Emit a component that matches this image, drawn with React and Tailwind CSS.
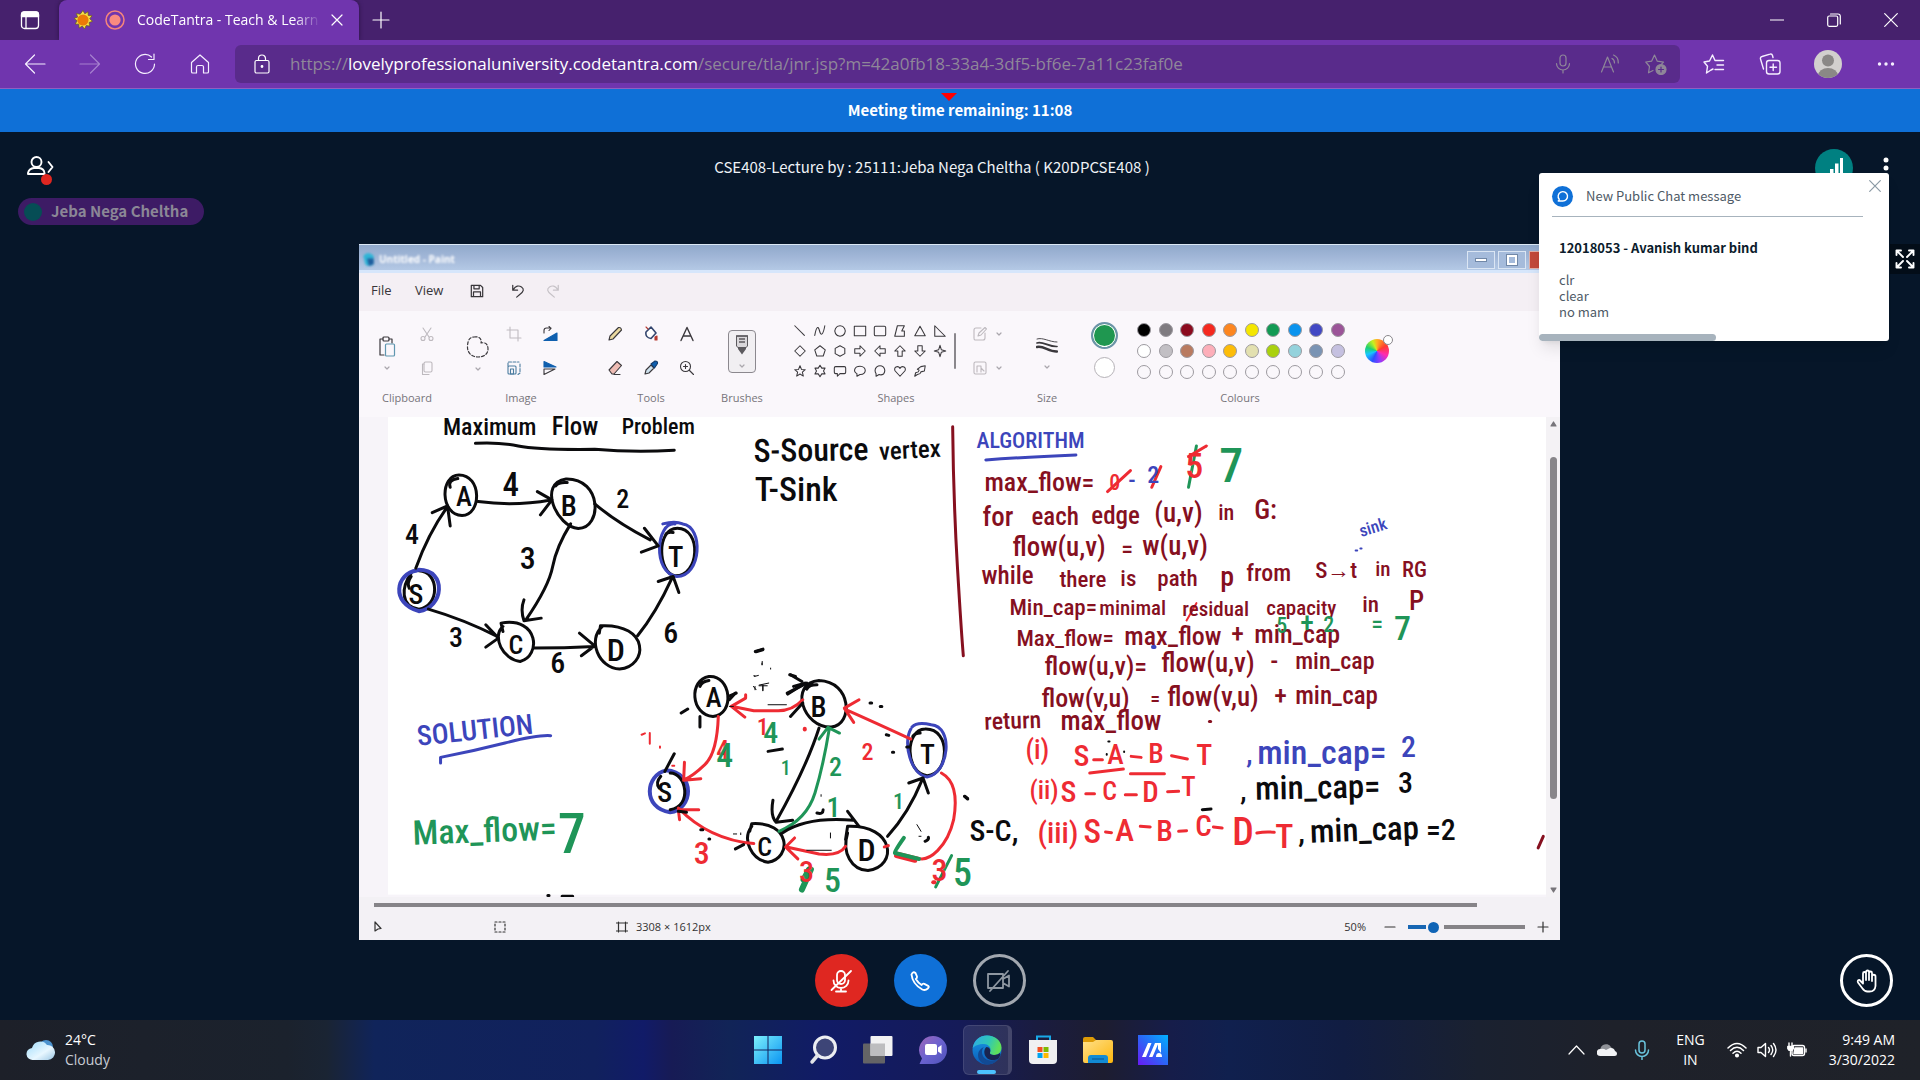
import React from "react";

const UI = "font-['Open_Sans','Noto_Sans',sans-serif]";
const MEET = "font-['Noto_Sans_CJK_SC','Open_Sans',sans-serif]";

function Icon({ w = 20, h, vb = "0 0 20 20", sw = 1.2, className = "", children }) {
  return (
    <svg width={w} height={h || w} viewBox={vb} fill="none" stroke="currentColor" strokeWidth={sw}
      strokeLinecap="round" strokeLinejoin="round" className={`shrink-0 ${className}`} aria-hidden="true">
      {children}
    </svg>
  );
}

/* ---------- Browser chrome ---------- */

function TabStrip() {
  return (
    <div className="flex h-10 items-stretch bg-[#46216d] text-white">
      <button aria-label="Tab actions" className="flex w-[59px] items-center justify-center">
        <Icon sw={1.3}><rect x="1.5" y="2" width="17" height="16.5" rx="3" /><path d="M1.5 4.5a2.5 2.5 0 0 1 2.5-2.5h12a2.5 2.5 0 0 1 2.500 2.500V6.500h-17z" fill="currentColor" /><path d="M6 7v11" /></Icon>
      </button>
      <div className="flex w-[300px] items-center rounded-t-lg bg-[#7035ae] pl-[14px] shadow-[0_0_4px_#2a1244]">
        <svg width="20" height="20" viewBox="0 0 20 20" className="shrink-0" aria-hidden="true">
          <path d="M10 .5l1.800 3.300L15 1.800l.2 3.700 3.800.3-2.300 3 2.800 2.500-3.500 1.200.8 3.600-3.600-.6L11.500 19l-2.200-3-3.200 2-.2-3.800-3.700-.2 2-3.200L1 8.500l3.600-1.300L3.500 3.600l3.700.6z" fill="#f3e04a" stroke="#6b6010" strokeWidth=".7" />
          <circle cx="10" cy="10" r="5.600" fill="#ec7a08" />
        </svg>
        <svg width="20" height="20" viewBox="0 0 20 20" className="ml-3 shrink-0" aria-hidden="true">
          <circle cx="10" cy="10" r="9" fill="none" stroke="#f4857b" strokeWidth="1.500" /><circle cx="10" cy="10" r="5.600" fill="#f98a80" />
        </svg>
        <span className="ml-3 w-[184px] overflow-hidden whitespace-nowrap text-sm [mask-image:linear-gradient(to_right,black_85%,transparent)]">CodeTantra - Teach &amp; Learn</span>
        <button aria-label="Close tab" className="ml-[9px]"><Icon w={14} vb="0 0 14 14"><path d="M2 2l10 10M12 2L2 12" /></Icon></button>
      </div>
      <button aria-label="New tab" className="flex w-[43px] items-center justify-center"><Icon w={18} vb="0 0 18 18"><path d="M9 1v16M1 9h16" /></Icon></button>
      <div className="mr-px ml-auto flex">
        <button aria-label="Minimize" className="flex w-[57px] items-center justify-center"><Icon w={14} vb="0 0 14 14"><path d="M.5 7h13" /></Icon></button>
        <button aria-label="Restore" className="flex w-[57px] items-center justify-center"><Icon w={14} vb="0 0 14 14"><rect x=".7" y="3" width="10" height="10.300" rx="1.500" /><path d="M3.500 1h7.500a2.300 2.300 0 0 1 2.300 2.300V11" /></Icon></button>
        <button aria-label="Close" className="flex w-[57px] items-center justify-center"><Icon w={14} vb="0 0 14 14"><path d="M.7.7l12.600 12.600M13.300.7L.7 13.300" /></Icon></button>
      </div>
    </div>
  );
}

function Toolbar() {
  return (
    <div className="flex h-[49px] items-center border-b border-[#9060c0] bg-[#7035ae] text-[#f5efff]">
      <div className="flex w-[235px] shrink-0 items-center pl-[7px]">
        <button aria-label="Back" className="flex w-[55px] justify-center"><Icon w={22} vb="0 0 22 22"><path d="M21 11H1.500M10.500 2L1.500 11l9 9" /></Icon></button>
        <button aria-label="Forward" className="flex w-[55px] justify-center opacity-40"><Icon w={22} vb="0 0 22 22"><path d="M1 11h19.500M11.500 2l9 9-9 9" /></Icon></button>
        <button aria-label="Refresh" className="flex w-[55px] justify-center"><Icon w={22} vb="0 0 22 22"><path d="M20.500 11a9.500 9.500 0 1 1-3-7M20 1v5.500h-5.500" /></Icon></button>
        <button aria-label="Home" className="flex w-[55px] justify-center"><Icon w={20}><path d="M1.500 8.500L10 1l8.500 7.500v9.200a1.300 1.300 0 0 1-1.300 1.300h-3.700v-6a1.500 1.500 0 0 0-1.500-1.500H8a1.500 1.500 0 0 0-1.500 1.500v6H2.800a1.300 1.300 0 0 1-1.300-1.300z" /></Icon></button>
      </div>
      <div className="flex h-[38px] flex-1 items-center rounded-md bg-[#592b8b] pl-[18px] text-[#8f8799]">
        <Icon w={18} h={20} vb="0 0 18 20" className="text-white"><rect x="2" y="6.500" width="14" height="12.500" rx="1.500" /><path d="M5.500 6V4.500a3.500 3.500 0 0 1 7 0V6" /><circle cx="9" cy="12.500" r=".8" fill="currentColor" /></Icon>
        <div role="textbox" aria-label="Address" className="ml-[19px] flex-1 whitespace-nowrap text-[17px]">
          https://<span className="text-white">lovelyprofessionaluniversity.codetantra.com</span>/secure/tla/jnr.jsp?m=42a0fb18-33a4-3df5-bf6e-7a11c23faf0e
        </div>
        <button aria-label="Voice search" className="flex w-12 justify-center"><Icon><rect x="7" y="1" width="6" height="11" rx="3" /><path d="M3.500 9.500a6.500 6.500 0 0 0 13 0M10 16v3" /></Icon></button>
        <button aria-label="Read aloud" className="flex w-[46px] justify-center"><Icon><path d="M1.500 18L7.500 3l6 15M3.500 13h8M12 4.500c2 1 2.500 2.500 2.500 4.500M13.500 1c3.500 1.500 5 4.500 4.800 8" /></Icon></button>
        <button aria-label="Add to favorites" className="mr-px flex w-[46px] justify-center"><Icon w={22} vb="0 0 22 22"><path d="M8 17.500l-4.500 2.300 1-6.300L.8 9l5.800-.8L9.500 2l2.800 6.200 6.200.9-2 2" /><circle cx="16" cy="16.500" r="5" fill="currentColor" /><path d="M13.500 16.500h5M16 14v5" stroke="#592b8b" /></Icon></button>
      </div>
      <div className="flex w-[240px] shrink-0 items-center pl-[6px]">
        <button aria-label="Favorites" className="flex w-14 justify-center"><Icon w={22} vb="0 0 22 22" sw={1.400}><path d="M8 17l-4.500 3 1-6.700L1 9l5.500-1L9.500 2l2.500 5.500h8.500M14 12h6.500M12 16.500h8.500M8 17l2-1" /></Icon></button>
        <button aria-label="Collections" className="flex w-14 justify-center"><Icon w={22} vb="0 0 22 22" sw={1.400}><rect x="7.500" y="7.500" width="13.500" height="13.500" rx="2.500" /><path d="M14.200 11v6.500M11 14.200h6.500M4.500 16L1.500 6a2 2 0 0 1 1.500-2.500l8-2.300A2 2 0 0 1 13.500 2.500l.5 2" /></Icon></button>
        <button aria-label="Profile" className="flex w-[60px] justify-center">
          <svg width="28" height="28" viewBox="0 0 28 28"><clipPath id="av"><circle cx="14" cy="14" r="14" /></clipPath><g clipPath="url(#av)"><rect width="28" height="28" fill="#d2d0ce" /><circle cx="14" cy="10.500" r="6" fill="#8a8886" /><ellipse cx="14" cy="26" rx="10" ry="8" fill="#8a8886" /></g></svg>
        </button>
        <button aria-label="Settings and more" className="flex w-14 justify-center"><Icon sw={0}><g fill="currentColor"><circle cx="3.500" cy="10" r="1.700" /><circle cx="10" cy="10" r="1.700" /><circle cx="16.500" cy="10" r="1.700" /></g></Icon></button>
      </div>
    </div>
  );
}

/* ---------- Paint ribbon ---------- */

function Group({ label, className, children }) {
  return (
    <div className={`flex shrink-0 flex-col ${className}`}>
      <div className="flex h-[60px] items-center">{children}</div>
      <span className="mt-2 text-center text-[11px] leading-[18px] text-[#77747a]">{label}</span>
    </div>
  );
}

function RI({ label, className = "", children, ...p }) {
  return <button aria-label={label} className={`flex h-[26px] items-center justify-center ${className}`}><Icon w={16} vb="0 0 16 16" sw={1.1} {...p}>{children}</Icon></button>;
}

function Caret({ label = "More" }) {
  return <button aria-label={label} className="flex justify-center text-[#aaa7ad]"><Icon w={6} h={4} vb="0 0 6 4"><path d="M1 1l2 2 2-2" /></Icon></button>;
}

const shapes = [
  ["Line", "M2 2l11 11"], ["Curve", "M2 13C4 2 6 2 7.500 8s4 5 6-6"], ["Oval", "M8 2a6 6 0 1 0 .1 0z"], ["Rectangle", "M1.500 2.500h13v11h-13z"],
  ["Rounded rectangle", "M3 2.500h10q1.500 0 1.500 1.500v8q0 1.500-1.500 1.500H3q-1.500 0-1.500-1.500V4q0-1.500 1.500-1.500z"], ["Polygon", "M5 2h8l-3 6h3v6H2z"], ["Triangle", "M8 2.500l6 11H2z"], ["Right triangle", "M2 2v12h12z"],
  ["Diamond", "M8 2l6 6-6 6-6-6z"], ["Pentagon", "M8 2l6 4.700-2.300 7H4.300L2 6.700z"], ["Hexagon", "M8 2l5.500 3v6L8 14l-5.500-3V5z"], ["Right arrow", "M2 5.500h6V2l6 6-6 6v-3.500H2z"],
  ["Left arrow", "M14 5.500H8V2L2 8l6 6v-3.500h6z"], ["Up arrow", "M5.500 14V8H2l6-6 6 6h-3.500v6z"], ["Down arrow", "M5.500 2v6H2l6 6 6-6h-3.500V2z"], ["Four point star", "M8 1.500l1.500 5 5 1.500-5 1.500-1.500 5-1.500-5-5-1.500 5-1.500z"],
  ["Five point star", "M8 2l1.700 4.200 4.300.3-3.300 2.900 1.100 4.400L8 11.400l-3.800 2.400 1.100-4.400L2 6.500l4.300-.3z"], ["Six point star", "M8 1.500l2 3.200h3.800L12 8l1.800 3.300H10l-2 3.200-2-3.200H2.200L4 8 2.200 4.700H6z"], ["Rounded callout", "M3 3h10q1.500 0 1.500 1.500v5Q14.500 11 13 11H8l-3 3v-3H3q-1.500 0-1.500-1.500v-5Q1.500 3 3 3z"], ["Oval callout", "M8 2.500c8 0 8 10 0 9.500l-3.500 2V11C-.5 8 2 2.500 8 2.500z"],
  ["Cloud callout", "M4 3.500q4-3 8 0 3 4 0 8-2.500 1.500-5 .5l-3.500 2v-3q-2.500-4 .5-7.500z"], ["Heart", "M8 14L2.500 8C0 4 5.500 1 8 5c2.500-4 8-1 5.500 3z"], ["Lightning", "M14 2l-1 6-4 1-1 2-3 1-3 2 1-4 3-1 1-2-2-1 4-3z"],
];

const palette = [
  ["bg-black", "bg-[#7f7b80]", "bg-[#8b0a1e]", "bg-[#f5291f]", "bg-[#fd8620]", "bg-[#f5e600]", "bg-[#139a54]", "bg-[#0a93ee]", "bg-[#4248c4]", "bg-[#9b5498]"],
  ["bg-white", "bg-[#c2bfc4]", "bg-[#b97a60]", "bg-[#fdaeb9]", "bg-[#fdbc08]", "bg-[#e3e0b0]", "bg-[#aad10e]", "bg-[#94d2dc]", "bg-[#7a93b4]", "bg-[#c5c0e0]"],
  Array(10).fill("bg-transparent"),
];

function Ribbon() {
  return (
    <div className="flex h-[106px] shrink-0 overflow-hidden bg-[#faf7fb] pt-[10px] text-[#3a383c]">
      <Group label="Clipboard" className="w-24">
        <div className="ml-2 flex w-10 flex-col items-center gap-2 pt-1">
          <button aria-label="Paste"><Icon w={18} h={22} vb="0 0 18 22"><path d="M5 3H2v16h4" /><rect x="5" y="1" width="6" height="4" rx="1" /><path d="M11 3h3v4" /><rect x="7.500" y="8" width="9" height="12" rx="1" stroke="#5f97b0" /></Icon></button>
          <Caret />
        </div>
        <div className="flex w-10 flex-col items-center gap-2 text-[#bdb9be]">
          <RI label="Cut"><path d="M4 2l6 9M12 2L6 11" /><circle cx="4" cy="12.500" r="2" /><circle cx="12" cy="12.500" r="2" /></RI>
          <RI label="Copy"><rect x="5" y="2" width="8" height="10" rx="1.500" /><path d="M5 4H3.500v10.500H10" /></RI>
        </div>
      </Group>
      <Group label="Image" className="w-[132px]">
        <div className="flex w-[46px] flex-col items-center gap-2 pt-1">
          <button aria-label="Select"><Icon w={24} vb="0 0 24 24"><path strokeDasharray="3 2" d="M8 2c5-1 8 2 7 6 4-1 7 1 7 6s-4 8-10 8S1 18 1.500 11 4 2.500 8 2z" /></Icon></button>
          <Caret />
        </div>
        <div className="flex w-[26px] flex-col items-center gap-2">
          <RI label="Crop" className="text-[#c0bcc1]"><path d="M4 1v11h11M1 4h11v11" /></RI>
          <RI label="Resize" className="text-[#4b7da0]"><path d="M2 6V2h11M14 4v9l-2 1.500" strokeDasharray="3 1.500" /><rect x="2" y="6" width="8" height="8" rx="1" /><rect x="4.500" y="9" width="3" height="5" /></RI>
        </div>
        <div className="flex w-[46px] flex-col items-center gap-2">
          <RI label="Rotate"><path d="M2 7V4.500A2.500 2.500 0 0 1 4.500 2H9M7 .5L9 2.300 7 4.500" /><path d="M15 7v7.500H2z" fill="#0f5fae" stroke="#0f5fae" /></RI>
          <RI label="Flip"><path d="M2 1.500L14 7H2z" fill="#0f5fae" stroke="#0f5fae" /><path d="M2 14.500L13 9H2z" /></RI>
        </div>
      </Group>
      <Group label="Tools" className="w-32">
        <div className="grid flex-1 grid-cols-3 gap-y-2 px-[10px]">
          <RI label="Pencil"><path d="M2 14l1-4 8.500-8.500q2.500-.5 3 2.500L6 13z" fill="#ead9a0" /></RI>
          <RI label="Fill"><path d="M3 6l5-5 5 6-5 5.500q-6-1-5-6.500z" fill="#fff" stroke="#34466e" strokeWidth="1.600" /><path d="M5 3L3 1M14 10v4h-2v-3z" fill="#b63a30" stroke="#b63a30" /></RI>
          <RI label="Text"><path d="M2 14.500L8 1.500l6 13M4.500 10h7" strokeWidth="1.400" /></RI>
          <RI label="Eraser"><path d="M2 10l8-8.500 4.500 4L7 14H5z" fill="#eebcb4" /><path d="M7 14.500h6" /></RI>
          <RI label="Colour picker"><path d="M2 14l1-4 5-5 3 3-5 5z" fill="#cfe2ee" /><path d="M8 4l4-3q3 0 2.500 2.500L11.500 8z" fill="#0f5fae" stroke="#123c6c" /></RI>
          <RI label="Magnifier"><circle cx="6.500" cy="6.500" r="5" /><path d="M10.500 10.500l4 4M4.500 6.500h4M6.500 4.500v4" /></RI>
        </div>
      </Group>
      <Group label="Brushes" className="w-[54px]">
        <button aria-label="Brushes" className="mx-auto flex h-[43px] w-7 flex-col items-center justify-between rounded border border-[#8b888e] bg-[#f1eff2] py-1">
          <svg width="14" height="20" viewBox="0 0 14 20" aria-hidden="true"><path d="M1.500 1h11v10l-2.500 2.500H4L1.500 11z" fill="#d9d7da" stroke="#5c5a5e" /><path d="M1 1h12M4 4h6M4 7h6" stroke="#5c5a5e" strokeWidth="1.400" /><path d="M3 12h8v2l-4 5.500L3 14z" fill="#5c5a5e" /></svg>
          <Caret label="Brush options" />
        </button>
      </Group>
      <Group label="Shapes" className="w-[254px]">
        <div className="ml-[21px] grid grid-cols-[repeat(8,20px)] grid-rows-[repeat(3,20px)]">
          {shapes.map(([n, d]) => <button key={n} aria-label={n} className="flex items-center justify-center"><Icon w={14} vb="0 0 16 16"><path d={d} /></Icon></button>)}
        </div>
        <div className="ml-1 h-9 w-[2px] rounded bg-[#8a878c]" />
        <div className="ml-4 flex flex-col gap-2 text-[#bdb9be]">
          <div className="flex items-center gap-2"><RI label="Outline"><path d="M13 7v5q0 2-2 2H3q-1 0-1-2V4q0-2 2-2h5M6 10l1-3 6-5.500 1.500 1.500L9 9z" /></RI><Caret label="Outline options" /></div>
          <div className="flex items-center gap-2"><RI label="Fill style"><rect x="2" y="2" width="12" height="12" rx="1.500" /><path d="M5 12V6h4v6M9 8l3 3" /></RI><Caret label="Fill options" /></div>
        </div>
      </Group>
      <Group label="Size" className="w-12">
        <div className="flex flex-1 flex-col items-center gap-3 pt-1">
          <button aria-label="Size"><Icon w={22} h={16} vb="0 0 22 16"><path d="M1 2c6-2 12 3 20 3" strokeWidth=".9" /><path d="M1 6c6-2 12 4 20 3.500" strokeWidth="1.700" /><path d="M1 10c6-2 12 5 20 4.500" strokeWidth="2.400" /></Icon></button>
          <Caret />
        </div>
      </Group>
      <Group label="Colours" className="w-[338px]">
        <div className="flex w-[66px] flex-col items-center gap-2 pb-[3px]">
          <button aria-label="Colour 1" className="size-[27px] rounded-full border-2 border-[#6c93a8] bg-[#1f9750] ring-1 ring-inset ring-white" />
          <button aria-label="Colour 2" className="size-[21px] rounded-full border border-[#b5b2b7] bg-white" />
        </div>
        <div className="flex w-52 flex-col gap-[7px]">
          {palette.map((row, r) => (
            <div key={r} className="flex justify-between">
              {row.map((c, i) => <button key={i} aria-label={`Colour ${r * 10 + i + 1}`} className={`size-[14px] rounded-full border border-[#9d9aa0] ${c}`} />)}
            </div>
          ))}
        </div>
        <button aria-label="Edit colours" className="relative mx-auto size-6 rounded-full bg-[conic-gradient(#ffb020,#ff3b30_60deg,#ff2bb0_115deg,#8a3bff_165deg,#2a50ff_205deg,#16c8ff_250deg,#20d070_290deg,#c6f020_335deg,#ffb020)]">
          <span className="absolute -top-1 -right-1 size-[10px] rounded-full border border-[#8a878c] bg-white" />
        </button>
      </Group>
    </div>
  );
}

/* ---------- Canvas drawing ---------- */

const K = "#0b0b0d", M = "#86101f", R = "#ee2b33", B = "#3c45bb", G = "#1f9558";

/* [text, x, baseline, size, colour, rotation] */
const words = [
  ["Maximum", 443, 435, 24, K], ["Flow", 552, 435, 25, K], ["Problem", 622, 434, 22, K],
  ["S-Source", 754, 462, 32, K, -1], ["vertex", 880, 460, 25, K, -3], ["T-Sink", 755, 501, 34, K],
  ["ALGORITHM", 977, 448, 22, B], ["max_flow=", 985, 491, 26, M],
  ["for", 983, 526, 27, M], ["each", 1032, 525, 25, M], ["edge", 1092, 524, 25, M], ["(u,v)", 1155, 522, 27, M], ["in", 1219, 520, 22, M], ["G:", 1255, 519, 27, M],
  ["flow(u,v)", 1013, 556, 27, M], ["=", 1122, 557, 24, M], ["w(u,v)", 1143, 555, 27, M],
  ["while", 982, 584, 25, M], ["there", 1060, 587, 23, M], ["is", 1121, 586, 23, M], ["path", 1158, 586, 23, M], ["p", 1221, 586, 28, M], ["from", 1247, 581, 24, M], ["S→t", 1316, 578, 23, M], ["in", 1376, 576, 21, M], ["RG", 1403, 577, 22, M],
  ["Min_cap=", 1010, 615, 23, M], ["minimal", 1100, 615, 21, M], ["residual", 1183, 616, 21, M], ["capacity", 1267, 615, 21, M], ["in", 1363, 612, 23, M], ["P", 1410, 610, 27, M],
  ["Max_flow=", 1017, 646, 23, M], ["max_flow", 1125, 645, 26, M], ["+", 1232, 642, 26, M], ["min_cap", 1255, 643, 26, M],
  ["flow(u,v)=", 1045, 675, 26, M], ["flow(u,v)", 1162, 672, 27, M], ["-", 1271, 670, 26, M], ["min_cap", 1296, 669, 24, M],
  ["flow(v,u)", 1042, 707, 26, M], ["=", 1151, 706, 20, M], ["flow(v,u)", 1168, 706, 27, M], ["+", 1275, 704, 26, M], ["min_cap", 1296, 704, 25, M],
  ["return", 985, 730, 24, M, -2], ["max_flow", 1061, 730, 27, M],
  ["0", 1110, 490, 22, R], ["-", 1129, 488, 24, B], ["2", 1148, 483, 24, B], ["5", 1186, 478, 36, R], ["7", 1220, 482, 48, G], ["sink", 1362, 537, 17, B, -17],
  ["5", 1277, 633, 22, G], ["+", 1301, 632, 28, G], ["2", 1324, 632, 22, G], ["=", 1372, 632, 24, G], ["7", 1395, 640, 34, G],
  ["(i)", 1026, 759, 27, R], ["S", 1074, 766, 30, R], ["A", 1108, 764, 28, R], ["B", 1149, 763, 28, R], ["T", 1197, 765, 30, R], [",", 1247, 763, 28, B], ["min_cap=", 1258, 764, 34, B], ["2", 1402, 757, 30, B],
  ["(ii)", 1030, 799, 26, R], ["S", 1061, 802, 30, R], ["C", 1103, 800, 26, R], ["D", 1143, 802, 29, R], ["T", 1182, 796, 27, R], [",", 1241, 800, 28, K], ["min_cap=", 1256, 800, 33, K, -1], ["3", 1399, 793, 30, K],
  ["S-C,", 970, 841, 30, K], ["(iii)", 1038, 843, 30, R], ["S", 1084, 843, 33, R], ["A", 1116, 841, 32, R], ["B", 1157, 841, 30, R], ["C", 1196, 836, 29, R], ["D", 1233, 845, 38, R], ["T", 1276, 848, 34, R], [",", 1299, 842, 30, K], ["min_cap", 1311, 843, 33, K, -2], ["=2", 1427, 840, 30, K],
  ["SOLUTION", 418, 746, 28, B, -6], ["Max_flow=", 413, 845, 34, G, -2], ["7", 558, 853, 56, G],
];

/* [text, centre x, centre y, size, colour] */
const marks = [
  ["A", 464, 497, 27, K], ["B", 569, 506, 29, K], ["T", 676, 557, 29, K], ["S", 416, 595, 28, K], ["C", 516, 645, 26, K], ["D", 616, 650, 32, K],
  ["4", 511, 485, 33, K], ["2", 623, 499, 26, K], ["4", 412, 535, 28, K], ["3", 528, 558, 32, K], ["3", 456, 638, 28, K], ["6", 558, 663, 30, K], ["6", 671, 633, 30, K],
  ["A", 714, 698, 27, K], ["B", 819, 707, 29, K], ["T", 928, 755, 28, K], ["S", 665, 793, 28, K], ["C", 765, 847, 26, K], ["D", 867, 850, 32, K],
  ["1", 763, 727, 24, R], ["4", 771, 733, 30, G], ["4", 723, 750, 26, R], ["4", 725, 755, 34, G], ["1", 786, 768, 20, G], ["2", 836, 767, 26, G], ["2", 868, 752, 24, R],
  ["3", 702, 853, 32, R], ["1", 834, 808, 28, G], ["1", 899, 802, 22, G], ["3", 807, 872, 30, R], ["5", 833, 880, 34, G], ["3", 940, 870, 32, R], ["5", 963, 873, 38, G],
];

function Strokes({ t, items }) {
  return (
    <g transform={t}>
      {items.map(([d, c, w = 3], i) => <path key={i} d={d} stroke={c} strokeWidth={w} vectorEffect="non-scaling-stroke" />)}
    </g>
  );
}

const firstGraph = [
  ["M328 130Q390 126 440 138T640 148Q740 158 848 151", K],
  ["M262 262Q255 240 282 236", K], ["M285 225C345 225 345 345 293 347C235 345 235 225 285 225", K],
  ["M538 258Q545 246 568 248", K], ["M565 237C660 235 660 385 597 386C540 380 490 250 565 237", K],
  ["M856 385C800 385 805 520 850 528C915 530 920 385 856 385M825 405Q830 395 845 398", K],
  ["M850 372C800 365 790 520 855 530C920 530 925 380 870 372Q850 362 818 372", B],
  ["M160 520C135 560 130 620 180 628C235 620 235 515 180 513M160 530Q148 550 155 565", K],
  ["M175 512C120 520 105 610 180 634C245 625 255 510 180 510", B, 4],
  ["M400 680C370 710 400 780 445 785C500 770 495 650 395 670L400 695", K],
  ["M660 680C620 720 650 805 705 808C780 800 785 670 655 678L652 700", K],
  ["M335 305Q430 320 525 300M490 275L528 300L498 345", K], ["M172 505Q205 400 255 320M215 338L255 318L262 378", K],
  ["M640 312Q700 370 785 420M770 385L806 438L762 457", K], ["M577 372Q540 440 530 500T460 660M455 600Q445 630 455 663L500 655", K],
  ["M205 628Q300 660 385 710M355 675L388 715L355 742", K], ["M480 745Q560 745 640 740M600 700L640 738L605 768", K],
  ["M752 708Q800 640 842 535M806 545L845 530L860 578", K], ["M1060 755L1080 748", K], ["M1078 785V795M1058 830L1068 827M1055 860L1062 870M1070 856L1095 850M1080 856V872M1100 805V808", K, 1],
  ["M1150 825L1165 830M1160 860L1190 850L1145 883M990 890L1010 880", K],
];

const secondGraph = [
  ["M222 370V353Q300 335 380 310T492 288", B],
  ["M880 110C830 120 835 225 890 230C945 225 935 105 880 110M858 140Q862 125 880 122", K],
  ["M1150 122C1230 125 1235 255 1180 262C1110 265 1075 130 1150 122M1120 148Q1125 135 1145 135", K],
  ["M1410 268C1360 270 1360 400 1415 408C1470 405 1475 265 1410 268M1380 290Q1385 280 1398 280", K],
  ["M1375 268C1355 310 1375 405 1415 412C1470 400 1480 260 1425 255Q1390 245 1378 262", B],
  ["M775 392C725 405 715 505 785 518C840 510 850 400 775 392", B, 4], ["M785 400C825 400 840 500 785 510M762 410Q748 430 758 445", K], ["M795 342L772 395", K],
  ["M985 560C960 600 985 660 1025 668C1085 655 1080 545 985 552L980 575", K], ["M1220 580C1205 640 1230 690 1270 693C1345 680 1335 555 1220 560L1215 600", K],
  ["M1110 180Q1085 213 1050 213H990L938 200M970 165V175L935 200L968 232", R], ["M903 230Q900 340 870 375T820 420M820 368L818 422L860 417", R],
  ["M1375 298Q1290 250 1213 208M1248 180L1212 205L1235 248", R], ["M990 612Q880 600 805 505M855 510H805L808 540", R], ["M1215 620Q1200 650 1150 643L1070 622M1090 595L1068 622L1098 658", R],
  ["M1450 400C1480 420 1490 470 1480 540C1465 620 1420 670 1390 655L1340 640", R], ["M1310 622L1320 618", R],
  ["M1340 648L1385 662", R, 5], ["M1358 595Q1335 635 1336 640L1395 658", G, 4],
  ["M1150 265Q1120 380 1045 545M1037 482Q1030 530 1045 548L1085 542", K], ["M1052 575Q1120 540 1140 460T1175 268M1150 298L1172 263L1200 280", G],
  ["M1060 580Q1120 530 1235 542M1220 515L1248 560", K], ["M1318 590Q1370 520 1403 420M1370 430L1405 415L1418 460", K],
  ["M1080 105L1108 125M1120 130L1072 160M1110 190L1080 230M930 180L945 160M812 220L828 208M858 230V262M1025 335L1060 328M945 628L965 615", K],
  ["M995 36L1012 30M1275 190h4M1300 200h4M1330 338h3M1365 322h5M1315 285l6 2M1508 470l6 6M860 570h5M880 598h2M805 515l20 3M1145 520q15 5 15-10M1410 605q10-5 8-12M485 768h3M520 770h26", K, 3],
  ["M1010 70v5M990 108h3M993 140v10M1003 138h20M1012 138v15M1025 195h45M930 200h10M940 583h8M958 580v5M1390 555l10 20M1178 580v15M1120 632h60M1155 465v5M1395 590h5", K, 1],
  ["M735 280V312M715 285l8-4M760 320v4M790 378h5", R, 2], ["M1115 267v2", R, 4],
  ["M1108 750L1130 690M1112 720L1125 690", G, 6], ["M1436 742L1475 648", G], ["M1430 728h3", R, 4],
];

const algorithm = [
  ["M8 80Q10 300 20 500T35 768", M], ["M92 180Q180 172 320 165", B], ["M400 275L458 212", R], ["M512 262L535 200", R], ["M605 262L625 138", G], ["M605 170L650 138", R],
  ["M600 662L625 610", R, 2], ["M515 742h4", B, 4], ["M1028 452h4M1040 446h3", B, 2], ["M658 965h3", M, 3],
];

const steps = [
  ["M365 180h22M460 170l25 3M562 168L602 178M355 220L440 208M458 222h86", R], ["M345 282h22M445 285h28M552 276L580 275", R], ["M395 397l15 2M483 380l25 2M580 395l20-2M668 382l22 3M778 400Q800 395 822 398", R],
  ["M402 125h3M398 163v2M442 155v2", K, 2], ["M640 330L662 328M38 290L46 298", K], ["M1490 445L1503 410", M],
];

function Drawing() {
  return (
    <svg viewBox="359 417 1188 480" className="block w-full overflow-visible" role="img" aria-label="Maximum flow lecture notes">
      <rect x="388" y="417" width="1159" height="478" fill="#fff" />
      <g fill="none" strokeLinecap="round" strokeLinejoin="round">
        <Strokes t="translate(350 400) scale(.3827 .3333)" items={firstGraph} />
        <Strokes t="translate(350 640) scale(.4082 .3333)" items={secondGraph} />
        <Strokes t="translate(950 400) scale(.3954 .3333)" items={algorithm} />
        <Strokes t="translate(950 700) scale(.3954 .3333)" items={steps} />
      </g>
      <g className="font-['Roboto_Condensed',Roboto,sans-serif] font-medium">
        {words.map(([s, x, y, z, c, r = 0], i) => <text key={i} x={x} y={y} fontSize={z} fill={c} transform={r ? `rotate(${r} ${x} ${y})` : undefined}>{s}</text>)}
        {marks.map(([s, x, y, z, c], i) => <text key={i} x={x} y={y} fontSize={z} fill={c} textAnchor="middle" dominantBaseline="central">{s}</text>)}
      </g>
    </svg>
  );
}

function PaintWindow() {
  return (
    <section aria-label="Shared screen" className="mr-[360px] ml-[359px] flex flex-1 flex-col bg-[#f7f4f9] font-['Open_Sans',sans-serif]">
      <header className="flex h-[29px] shrink-0 items-center border-t border-b-3 border-t-[#dbe8f5] border-b-[#d6e6fb] bg-linear-to-b from-[#90a9cb] via-[#a2b7d8] to-[#b4c9e5] pt-1 pl-[3px]">
        <svg width="13" height="15" viewBox="0 0 13 16" className="blur-[1px]" aria-hidden="true"><path d="M1 4q5-6 11 0v9q-5 4-9 0z" fill="#2fb4d6" /><path d="M5 7h7v6l-5 2z" fill="#1f5d9d" /></svg>
        <span className="ml-1 text-[10px] font-bold text-white blur-[1px]">Untitled - Paint</span>
        <div className="ml-auto flex gap-[3px] pr-[1px]">
          <button aria-label="Minimize Paint" className="flex h-[18px] w-7 items-center justify-center border border-[#dbe6f4] bg-[#a5bbdb]"><span className="h-1 w-3 border border-[#7188a8] bg-white" /></button>
          <button aria-label="Maximize Paint" className="flex h-[18px] w-7 items-center justify-center border border-[#dbe6f4] bg-[#a5bbdb]"><span className="size-[10px] border-2 border-white outline outline-[#7188a8]" /></button>
          <button aria-label="Close Paint" className="h-[18px] w-[30px] border border-[#e0b0a8] bg-[#c2493a]" />
        </div>
      </header>
      <nav className="flex h-[38px] shrink-0 items-center bg-[#f4eff4] pb-[2px] pl-3 text-[13px] text-[#38363a]">
        <button className="w-11 text-left">File</button>
        <button className="w-[53px] text-left">View</button>
        <button aria-label="Save" className="flex w-[18px] justify-center"><Icon w={14} vb="0 0 16 16" sw={1.400}><path d="M1.500 1.500h10.500l2.500 2.500v10.500h-13zM4.500 1.500v4h6v-4M4 14V9h8v5" /></Icon></button>
        <button aria-label="Undo" className="ml-[25px]"><Icon w={14} vb="0 0 16 16" sw={1.400}><path d="M2 1.500V7h5.500M2.500 6.500Q7 0 12 3.500T10 12l-3.500 3" /></Icon></button>
        <button aria-label="Redo" className="ml-[21px] text-[#c6c2c7]"><Icon w={14} vb="0 0 16 16" sw={1.400}><path d="M14 1.500V7H8.500M13.500 6.500Q9 0 4 3.500T6 12l3.500 3" /></Icon></button>
      </nav>
      <Ribbon />
      <div className="flex shrink-0">
        <div className="min-w-0 flex-1"><Drawing /></div>
        <div className="flex w-[14px] flex-col items-center bg-[#f4f2f5] pt-1 text-[#77757a]">
          <Icon w={7} h={6} vb="0 0 7 6"><path d="M1 5l2.500-4L6 5z" fill="currentColor" /></Icon>
          <div className="mt-[30px] h-[342px] w-[7px] rounded-sm bg-[#88868a]" />
          <Icon w={7} h={6} vb="0 0 7 6" className="mt-auto mb-1"><path d="M1 1l2.500 4L6 1z" fill="currentColor" /></Icon>
        </div>
      </div>
      <div className="flex flex-1 flex-col bg-[#f3f1f5] pt-[6px]">
        <div className="mr-[83px] ml-[15px] h-1 bg-[#868488]" />
        <footer className="flex flex-1 items-center pt-2 text-[11px] text-[#333]">
          <Icon w={8} h={12} vb="0 0 8 12" className="ml-[15px]"><path d="M1 1v9l3-2 3-.5z" /></Icon>
          <Icon w={12} vb="0 0 12 12" className="ml-[112px]"><rect x="1" y="1" width="10" height="10" strokeDasharray="2 2" /></Icon>
          <Icon w={12} vb="0 0 12 12" className="ml-[110px]"><path d="M2.500 1v10M9.500 1v10M0 2h12M0 10h12" /></Icon>
          <span className="ml-2">3308 × 1612px</span>
          <span className="ml-auto">50%</span>
          <button aria-label="Zoom out" className="ml-[18px]"><Icon w={12} vb="0 0 12 12"><path d="M1 6h10" /></Icon></button>
          <input type="range" aria-label="Zoom" min="0" max="100" defaultValue="19"
            className="mx-3 h-1 w-[117px] appearance-none bg-[linear-gradient(to_right,#1766b3_18px,transparent_18px,transparent_36px,#858387_36px)] [&::-webkit-slider-thumb]:size-[11px] [&::-webkit-slider-thumb]:appearance-none [&::-webkit-slider-thumb]:rounded-full [&::-webkit-slider-thumb]:bg-[#0f64b6]" />
          <button aria-label="Zoom in" className="mr-[11px]"><Icon w={12} vb="0 0 12 12"><path d="M1 6h10M6 1v10" /></Icon></button>
        </footer>
      </div>
    </section>
  );
}

/* ---------- Meeting ---------- */

function ChatToast() {
  return (
    <aside className="absolute top-[41px] right-[31px] z-10 flex h-[168px] w-[350px] flex-col overflow-hidden rounded-[3px] bg-white text-[#4e5a66] shadow-lg">
      <button aria-label="Dismiss" className="absolute top-[7px] right-2 text-[#8b9aa5]"><Icon w={12} vb="0 0 12 12"><path d="M.7.7l10.600 10.600M11.300.7L.7 11.300" /></Icon></button>
      <div className="mr-[26px] ml-[13px] flex h-11 items-center border-b border-[#a7b3bd] pt-[3px]">
        <span className="flex size-[21px] items-center justify-center rounded-full bg-[#0f70d7] text-white"><Icon w={15} vb="0 0 16 16" sw={1.500}><path d="M4.500 11A5 5 0 1 1 8 12.800H3.500q1-.5 1-1.800z" /></Icon></span>
        <span className="ml-[13px] text-[13px]">New Public Chat message</span>
      </div>
      <div className="ml-5 pt-[21px] text-[13px]">
        <p className="leading-5 font-bold text-[#0c1c2c]">12018053 - Avanish kumar bind</p>
        <p className="mt-[14px] leading-4">clr<br />clear<br />no mam</p>
      </div>
      <div className="mt-auto h-[7px] w-[177px] rounded bg-[#a7b3bd]" />
    </aside>
  );
}

function Meeting() {
  return (
    <main className={`relative flex min-h-0 flex-1 flex-col bg-[#061629] text-white ${MEET}`}>
      <div className="flex h-[112px] shrink-0 items-start justify-between">
        <div className="w-[244px] shrink-0">
          <button aria-label="Users and messages list" className="relative mt-[22px] ml-[26px] block"><Icon w={28} h={26} vb="0 0 28 26" sw={1.900}><circle cx="10.500" cy="8" r="5" /><path d="M2 20v-1q1-4.500 6-5h5q5 .5 5.500 5v1zM22.500 8l4 5-4 5" /></Icon><span className="absolute top-5 left-[15px] size-[11px] rounded-full bg-[#df2721]" /></button>
          <div className="mt-[18px] ml-[18px] inline-flex h-[27px] items-center gap-[9px] rounded-full bg-[#3d1b65] px-[6px] pr-4 text-[15px] font-bold whitespace-nowrap text-[#8b8796]"><span className="size-[18px] rounded-full bg-[#064d55]" />Jeba Nega Cheltha</div>
        </div>
        <h1 className="pt-6 text-[15px] leading-[22px] whitespace-nowrap text-[#eef2f6]">CSE408-Lecture by : 25111:Jeba Nega Cheltha ( K20DPCSE408 )</h1>
        <div className="flex w-[300px] shrink-0 justify-end pt-[17px]">
          <button aria-label="Connection status" className="flex size-[38px] items-center justify-center rounded-full bg-[#008081]"><Icon w={20} vb="0 0 20 20" sw={0}><path d="M1 16h3.500v4H1zM6 11h3.500v9H6zM11 5.500h3.500V20H11zM16 0h3v20h-3z" fill="currentColor" /></Icon></button>
          <button aria-label="Options" className="mr-7 ml-[27px] flex h-[38px] w-3 items-center justify-center"><Icon w={6} h={22} vb="0 0 6 22" sw={0}><g fill="currentColor"><circle cx="3" cy="3" r="2.500" /><circle cx="3" cy="11" r="2.500" /><circle cx="3" cy="19" r="2.500" /></g></Icon></button>
        </div>
      </div>
      <ChatToast />
      <button aria-label="Full screen" className="absolute top-[112px] right-0 flex h-[30px] w-[30px] items-center justify-center bg-[#030d18]"><Icon w={20} sw={1.900}><path d="M1.500 6V1.500H6M1.500 1.500L8 8M14 1.500h4.500V6M18.500 1.500L12 8M1.500 14v4.500H6M1.500 18.500L8 12M18.500 14v4.500H14M18.500 18.500L12 12" /></Icon></button>
      <PaintWindow />
      <div className="relative flex h-20 shrink-0 items-center justify-center gap-[26px] pr-20 pt-px">
        <button aria-label="Unmute" className="flex size-[53px] items-center justify-center rounded-full bg-[#df2721]"><Icon w={24} vb="0 0 24 24" sw={1.800}><rect x="8" y="2" width="8" height="13" rx="4" /><path d="M4.500 11.500a7.500 7.500 0 0 0 15 0M12 19v3M7 22.500h10M22 2L2.500 21" /></Icon></button>
        <button aria-label="Leave audio" className="flex size-[53px] items-center justify-center rounded-full bg-[#0f70d7]"><Icon w={22} vb="0 0 22 22" sw={1.900}><path d="M2.500 4.500Q4 1 6.500 3l1.500 3.500q.3 1.500-1.200 2.500 2 3.500 5.800 6 1.200-1.800 2.700-1.200l3.800 2q1.500 1-.3 2.700-2.500 2.300-5.500 1Q3.500 14 2.500 4.500z" /></Icon></button>
        <button aria-label="Share webcam" className="flex size-[53px] items-center justify-center rounded-full border-[3px] border-[#a2a8b0] text-[#8e97a1]"><Icon w={26} vb="0 0 26 24" sw={1.800}><path d="M2 5h15v14H2zM17 10l6-3.500v11L17 14M22 2L4 22" /></Icon></button>
        <button aria-label="Raise hand" className="absolute top-[14px] right-[27px] flex size-[53px] items-center justify-center rounded-full border-[3px] border-white"><Icon w={22} h={24} vb="0 0 22 24" sw={1.800}><path d="M7 13V4.500a1.500 1.500 0 0 1 3 0V11 3a1.500 1.500 0 0 1 3 0v8-7a1.500 1.500 0 0 1 3 0v8-4.500a1.500 1.500 0 0 1 3.500 0V17q-.5 5.500-6 5.500h-2q-3 0-5-3L2 13.500q-1-2.500 1.500-2.500L7 14.500z" /></Icon></button>
      </div>
    </main>
  );
}

/* ---------- Taskbar ---------- */

function TaskIcon({ label, children }) {
  return <button aria-label={label} className="flex h-[50px] w-[55px] items-center justify-center"><svg width="30" height="30" viewBox="0 0 30 30">{children}</svg></button>;
}

function Taskbar() {
  return (
    <footer className="grid h-[60px] shrink-0 grid-cols-[1fr_auto_1fr] items-center bg-[linear-gradient(to_right,#1d2029_0%,#1b222d_15%,#1a2433_17%,#10245a_19.500%,#11215d_31%,#111b68_33.500%,#171b55_35%,#112457_38%,#111b66_43%,#151b58_50%,#1a1c40_54%,#1d1d30_57.500%,#161d4a_61%,#10204e_64%,#111d42_70%,#1a2130_77%,#1e212a_84%,#1f2229_100%)] text-sm text-white">
      <button className="flex items-center gap-[10px] pl-[26px] text-left leading-5">
        <svg width="29" height="24" viewBox="0 0 29 24" aria-hidden="true"><defs><linearGradient id="cl" x1="0" y1="0" x2="1" y2="1"><stop stopColor="#9edcfb" /><stop offset=".6" stopColor="#e8f7ff" /><stop offset="1" stopColor="#9ac6e4" /></linearGradient></defs><circle cx="20" cy="9" r="7" fill="#4c93cf" /><path d="M7 22a6 6 0 0 1-1-12A8.500 8.500 0 0 1 21 7a7.500 7.500 0 0 1 1 15z" fill="url(#cl)" /></svg>
        <span>24°C<br /><span className="text-[#c8ccd4]">Cloudy</span></span>
      </button>
      <nav aria-label="Taskbar apps" className="flex items-center">
        <svg width="0" height="0" className="absolute" aria-hidden="true"><defs>
          <linearGradient id="w" x1="0" y1="0" x2="1" y2="1"><stop stopColor="#7df0fc" /><stop offset="1" stopColor="#0a94f2" /></linearGradient>
          <linearGradient id="ch" x1="0" y1="0" x2="1" y2="1"><stop stopColor="#a066b8" /><stop offset=".5" stopColor="#6a62d0" /><stop offset="1" stopColor="#4f52b8" /></linearGradient>
          <linearGradient id="e1" x1="0" y1="0" x2="1" y2=".3"><stop stopColor="#2fa8e8" /><stop offset=".6" stopColor="#2fc7b8" /><stop offset="1" stopColor="#5fe05a" /></linearGradient>
          <linearGradient id="e2" x1="0" y1="0" x2="0" y2="1"><stop stopColor="#199ae6" /><stop offset="1" stopColor="#0a5bb8" /></linearGradient>
          <linearGradient id="fo" x1="0" y1="0" x2="1" y2="1"><stop stopColor="#ffe08a" /><stop offset="1" stopColor="#fdb60c" /></linearGradient>
          <linearGradient id="ma" x1="0" y1="1" x2="1" y2="0"><stop stopColor="#6a19f5" /><stop offset=".5" stopColor="#2b66f6" /><stop offset="1" stopColor="#00b2ff" /></linearGradient>
        </defs></svg>
        <TaskIcon label="Start"><path d="M1 1h13.500v13.500H1zM15.500 1H29v13.500H15.500zM1 15.500h13.500V29H1zM15.500 15.500H29V29H15.500z" fill="url(#w)" /></TaskIcon>
        <TaskIcon label="Search"><circle cx="17" cy="12.500" r="10.500" fill="#3d4577" stroke="#eceef2" strokeWidth="3" /><path d="M9.500 20.500L4 27" stroke="#e2e4e8" strokeWidth="3.500" strokeLinecap="round" /></TaskIcon>
        <TaskIcon label="Task view"><rect y="8.500" width="22" height="20" rx="1" fill="#646466" /><rect x="7.500" y="1" width="22" height="20" rx="1" fill="#f2f2f3" /><path d="M7.500 8.500H22V21H7.500z" fill="#bdbdbf" /></TaskIcon>
        <TaskIcon label="Chat"><path d="M15 1a14 14 0 1 1 0 28H1.500l2.500-5.500A14 14 0 0 1 15 1z" fill="url(#ch)" /><rect x="7" y="9" width="12" height="11" rx="2" fill="#fff" /><path d="M20 12.500l3.500-2.500v9L20 16.500z" fill="#fff" /></TaskIcon>
        <button aria-label="Microsoft Edge" className="relative mx-[3px] flex h-[50px] w-[49px] items-center justify-center rounded-md border border-r-4 border-white/10 bg-white/10">
          <svg width="30" height="30" viewBox="0 0 30 30" className="ml-[2px]">
            <circle cx="15" cy="15" r="14.500" fill="url(#e2)" />
            <path d="M.7 13C2 5 8 .5 15 .5c8 0 14.500 5.500 14.500 12 0 5-3.500 7.500-7.500 7.500-3 0-4.500-1-4-2.500 2-4-1-8.500-6-8.500-5.500 0-9.500 2-11.300 4z" fill="url(#e1)" />
            <path d="M12 12c-4 4-2 12.500 6 13.500 4 .4 7-1 9-2.500-3 5-9 7.500-14.500 6C4 26 4 15 12 12z" fill="#124a94" />
            <path d="M18 17.500c-.5 1.500 1 2.500 4 2.500 2.500 0 4.500-.8 6-2l.5 2-2 3.500c-5 3-12 2-14-4.500-.8-3 .5-6 2-7 3 0 4.500 3 3.500 5.500z" fill="#1a2550" />
          </svg>
          <span className="absolute bottom-0 h-1 w-[19px] rounded-full bg-[#4cc2ff]" />
        </button>
        <TaskIcon label="Microsoft Store"><path d="M9 6V1.500h13V6" stroke="#18a8e8" strokeWidth="2" fill="none" /><path d="M1 5h28v20a4 4 0 0 1-4 4H5a4 4 0 0 1-4-4z" fill="#f0f0f1" /><path d="M9.500 12h5v5h-5z" fill="#f25022" /><path d="M15.500 12h5v5h-5z" fill="#7fba00" /><path d="M9.500 18h5v5h-5z" fill="#00a4ef" /><path d="M15.500 18h5v5h-5z" fill="#ffb900" /></TaskIcon>
        <TaskIcon label="File Explorer"><path d="M0 4q0-2 2-2h8l3 3v8H0z" fill="#dc9a06" /><path d="M0 7h10l3-2h15q2 0 2 2v19q0 2-2 2H2q-2 0-2-2z" fill="url(#fo)" /><path d="M5 28v-5q0-3 3-3h14q3 0 3 3v5z" fill="#128bd4" /><path d="M9 24h12" stroke="#0b5c99" strokeWidth="1.200" /></TaskIcon>
        <TaskIcon label="MyASUS"><path d="M0 0h30v30H0z" fill="url(#ma)" /><path d="M4 22L10 8h3.500L8 22zM11 22l6-14h3.500l-6 14zM20 8h3v10l-3-4zM18 22q0-4 3-4t3 4z" fill="#fff" /></TaskIcon>
      </nav>
      <div className="flex items-center justify-end pr-[25px] text-right leading-5">
        <button aria-label="Show hidden icons" className="mr-3"><Icon w={17} h={10} vb="0 0 17 10"><path d="M1 9l7.500-8L16 9" /></Icon></button>
        <svg width="20" height="14" viewBox="0 0 20 14" className="mr-[17px]" aria-hidden="true"><path d="M4 10a5.500 5.500 0 0 1 10-6l4 5z" fill="#8f9298" /><path d="M3 13a3.500 3.500 0 0 1 .5-7q3-1 5.500 1l4-2q4-.5 5 3 2 .5 2 2.500 0 2.500-2.500 2.500z" fill="#f2f3f5" /></svg>
        <Icon w={16} h={20} vb="0 0 16 20" sw={1.500} className="mr-[26px] text-[#69c3dc]"><rect x="5" y="1" width="6" height="12" rx="3" /><path d="M1.500 10a6.500 6.500 0 0 0 13 0M8 16.500V19.500" /></Icon>
        <button className="mr-[22px] text-center">ENG<br />IN</button>
        <button aria-label="Network, volume and battery" className="mr-[22px] flex items-center gap-[10px]">
          <Icon w={20} h={16} vb="0 0 20 16" sw={1.500}><path d="M1 6q9-9 18 0M3.500 8.500q6.500-6.500 13 0M6 11.200q4-4 8 0" /><circle cx="10" cy="13.500" r="1.300" fill="currentColor" /></Icon>
          <Icon w={20} h={16} vb="0 0 20 16" sw={1.400}><path d="M1 5.500h3L8.500 1.500v13L4 10.500H1zM11.500 5.500q2 2.500 0 5M14 3.500q3.500 4.500 0 9M16.500 1.500q5 6.500 0 13" /></Icon>
          <Icon w={20} h={16} vb="0 0 20 16" sw={1.400}><path d="M2 1v3M5 1v3M.8 4.500h5.500v2q-.5 2-2.700 2t-2.800-2zM3.500 8.500V14" fill="currentColor" /><rect x="5" y="3.500" width="12.500" height="10" rx="2" /><path d="M8 6h7.500v5.500H7z" fill="currentColor" /><path d="M19 7v3" /></Icon>
        </button>
        <button className="text-right">9:49 AM<br />3/30/2022</button>
      </div>
    </footer>
  );
}

export default function App() {
  return (
    <div className={`flex min-h-screen flex-col overflow-hidden ${UI}`}>
      <TabStrip />
      <Toolbar />
      <div className={`flex h-[43px] shrink-0 flex-col items-center bg-[#0f70d7] pt-1 text-white ${MEET}`}>
        <svg width="16" height="8" viewBox="0 0 16 8" className="mr-[23px] shrink-0" aria-hidden="true"><path d="M0 0h16L8 8z" fill="red" /></svg>
        <span className="text-[15px] leading-[18px] font-bold">Meeting time remaining: 11:08</span>
      </div>
      <Meeting />
      <Taskbar />
    </div>
  );
}
